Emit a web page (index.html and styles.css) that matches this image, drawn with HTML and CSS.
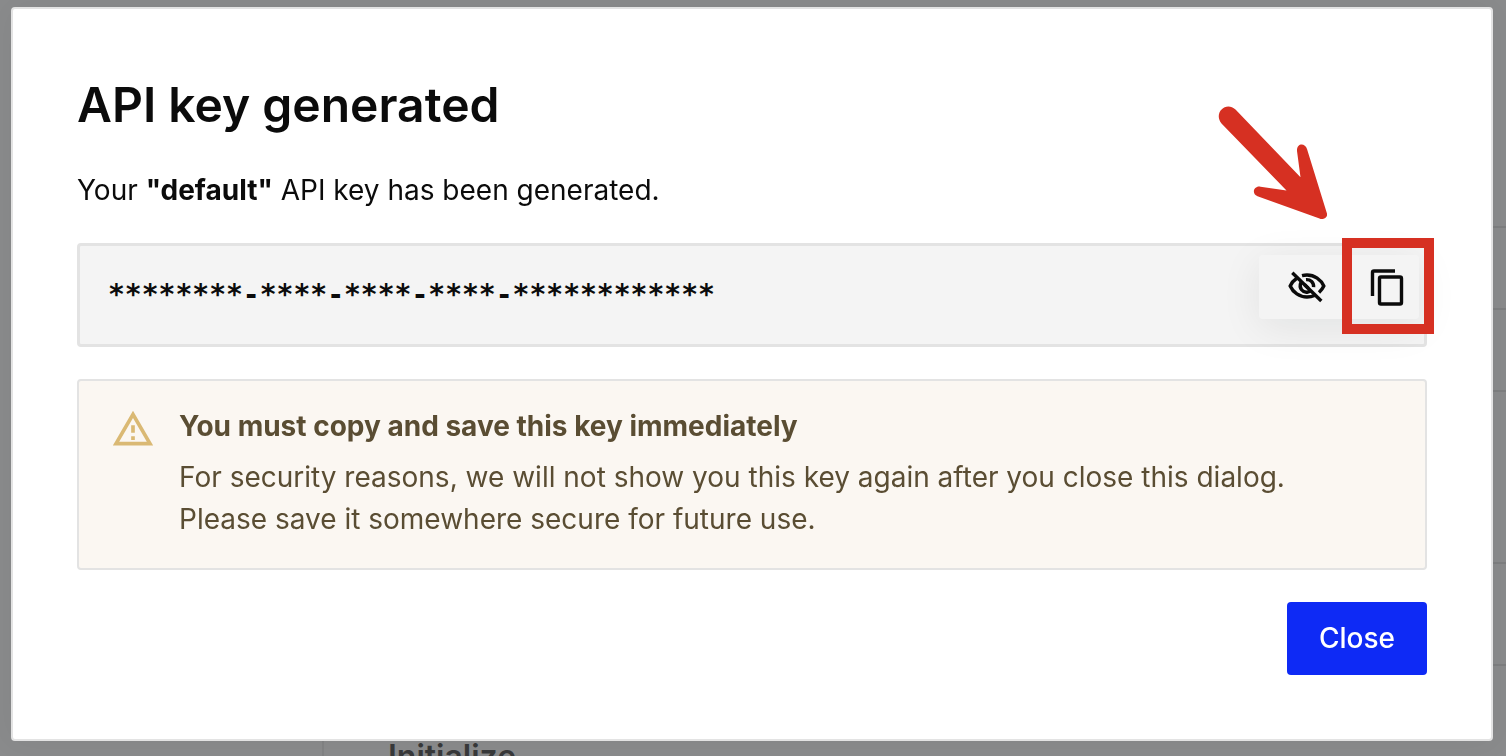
FILE: index.html
```html
<!DOCTYPE html>
<html lang="en">
<head>
<meta charset="utf-8">
<meta name="viewport" content="width=device-width, initial-scale=1">
<title>API key generated</title>
<link rel="stylesheet" href="styles.css">
</head>
<body>
<div class="page" aria-hidden="true">
  <div class="sidebar"></div>
  <div class="main"><h2 class="main-title">Initialize</h2></div>
  <div class="rail">
    <div class="rail-row rail-first"></div>
    <div class="rail-row rail-short"></div>
    <div class="rail-row rail-short"></div>
    <div class="rail-row rail-tall"></div>
    <div class="rail-row rail-medium"></div>
  </div>
</div>
<div class="overlay">
  <section class="dialog" role="dialog" aria-modal="true" aria-labelledby="dialog-title">
    <h1 class="title" id="dialog-title">API key generated</h1>
    <p class="message">Your <strong>"default"</strong> API key has been generated.</p>
    <div class="key-box">
      <code class="key">********-****-****-****-************</code>
      <div class="actions">
        <button class="icon-button" type="button" aria-label="Show key">
          <svg class="icon" viewBox="0 0 48 48" fill="none" stroke="currentColor" stroke-width="3.400">
            <path d="M13.500 15.500C10.500 17.500 8.300 20.300 7.200 23C10 29.500 16.500 34 24 34C26.800 34 29.300 33.500 31.500 32.500"/>
            <path d="M19 12.600C20.600 12.200 22.300 12 24 12C31.500 12 38 16.500 40.800 23C39.700 25.500 38 27.600 36 29.400"/>
            <path d="M17.800 19.500C15.500 25.500 20 29.700 24.200 29.200C26 29 27 28.600 28.500 27.300"/>
            <path d="M23 16.600C27.500 16.300 31 19.600 30.600 24.200"/>
            <path d="M21.500 21.500L25.500 25.500"/>
            <path d="M9.300 9.700L38.300 38"/>
          </svg>
        </button>
        <button class="icon-button" type="button" aria-label="Copy key">
          <svg class="icon" viewBox="0 0 48 48" fill="none" stroke="currentColor" stroke-width="3.400">
            <path d="M9.500 33V9.500a1.500 1.500 0 0 1 1.500-1.500H32"/>
            <rect x="16.500" y="14" width="22" height="27" rx="1.500"/>
          </svg>
        </button>
      </div>
      <div class="highlight"></div>
      <svg class="arrow" viewBox="0 0 109 113" aria-hidden="true">
        <path d="M17.500 3.500L82.500 71.300L79 45C78.500 37 87 36.500 89 43L108.800 107C110.300 111 106 114.500 101.500 112.400L39.500 90.300C33 87.500 36 79.500 42.500 80.700L68.500 84.600L3.500 17.500C-5 7 8-5.500 17.500 3.500Z"/>
      </svg>
    </div>
    <div class="alert" role="alert">
      <svg class="alert-icon" viewBox="0 0 24 24" aria-hidden="true">
        <path d="M12 5.990L19.530 19H4.470L12 5.990M12 2L1 21h22L12 2zm1 14h-2v2h2v-2zm0-6h-2v4h2v-4z"/>
      </svg>
      <div class="alert-body">
        <strong class="alert-title">You must copy and save this key immediately</strong>
        <p class="alert-text">For security reasons, we will not show you this key again after you close this dialog. Please save it somewhere secure for future use.</p>
      </div>
    </div>
    <button class="close" type="button">Close</button>
  </section>
</div>
</body>
</html>
```
FILE: styles.css
```css
* { box-sizing: border-box; }

body {
  margin: 0;
  font-family: Inter, "Liberation Sans", sans-serif;
  font-size: 28px;
  line-height: 42px;
  font-optical-sizing: none;
  color: #0b0b0b;
}

h1, h2, p { margin: 0; }

.page {
  display: flex;
  height: 100vh;
  overflow: hidden;
  background: #8a8b8c;
}

.sidebar {
  flex: 0 0 324px;
  margin-top: 64px;
  border-right: 2px solid #828384;
}

.main {
  flex: 1;
  display: flex;
  align-items: flex-end;
  padding-left: 64px;
}

.main-title {
  height: 20px;
  font-size: 32px;
  line-height: 42px;
  font-weight: 600;
  color: #38393a;
}

.rail { flex: 0 0 80px; }
.rail-row { border-bottom: 2px solid #7e7f80; }
.rail-first { height: 228px; }
.rail-short { height: 82px; }
.rail-tall { height: 172px; }
.rail-medium { height: 102px; }

.overlay {
  position: fixed;
  inset: 0;
  padding: 7px 13px 15px 11px;
}

.dialog {
  display: flex;
  flex-direction: column;
  gap: 32px;
  padding: 64px;
  background: #fff;
  border: 2px solid #e3e3e3;
  border-radius: 4px;
  box-shadow: 0 0 32px rgba(0, 0, 0, 0.05);
}

.title {
  font-size: 48px;
  line-height: 64px;
  font-weight: 600;
}

.key-box {
  position: relative;
  padding: 28px;
  background: #f4f4f4;
  border: 3px solid #e3e3e3;
  border-radius: 4px;
}

.key {
  display: block;
  font-family: "DejaVu Sans Mono", monospace;
  font-weight: 700;
}

.actions {
  position: absolute;
  top: 9px;
  right: 5px;
  display: flex;
  gap: 32px;
  padding: 8px 8px 8px 24px;
  background: #f4f4f4;
  border-radius: 4px;
  box-shadow: 0 8px 40px rgba(0, 20, 20, 0.08);
}

.icon-button {
  display: flex;
  padding: 0;
  border: 0;
  background: none;
  color: #0b0b0b;
}

.icon { width: 48px; height: 48px; }

.highlight {
  position: absolute;
  top: -8px;
  right: -10px;
  width: 92px;
  height: 96px;
  border: 10px solid #d63022;
}

.arrow {
  position: absolute;
  top: -140px;
  right: 97px;
  width: 109px;
  height: 113px;
  fill: #d63022;
}

.alert {
  display: flex;
  gap: 24px;
  padding: 24px 32px 28px;
  background: #fbf7f2;
  border: 2px solid #e3e3e3;
  border-radius: 4px;
  color: #5a4d33;
}

.alert-icon {
  flex: none;
  width: 44px;
  height: 44px;
  margin-top: 2px;
  fill: #dab974;
}

.alert-body {
  display: flex;
  flex-direction: column;
  gap: 9px;
}

.alert-text { max-width: 1160px; }

.close {
  align-self: flex-end;
  padding: 15px 32px 16px;
  border: 0;
  border-radius: 4px;
  background: #0e2af5;
  color: #fff;
  font: inherit;
  font-weight: 500;
}
```
